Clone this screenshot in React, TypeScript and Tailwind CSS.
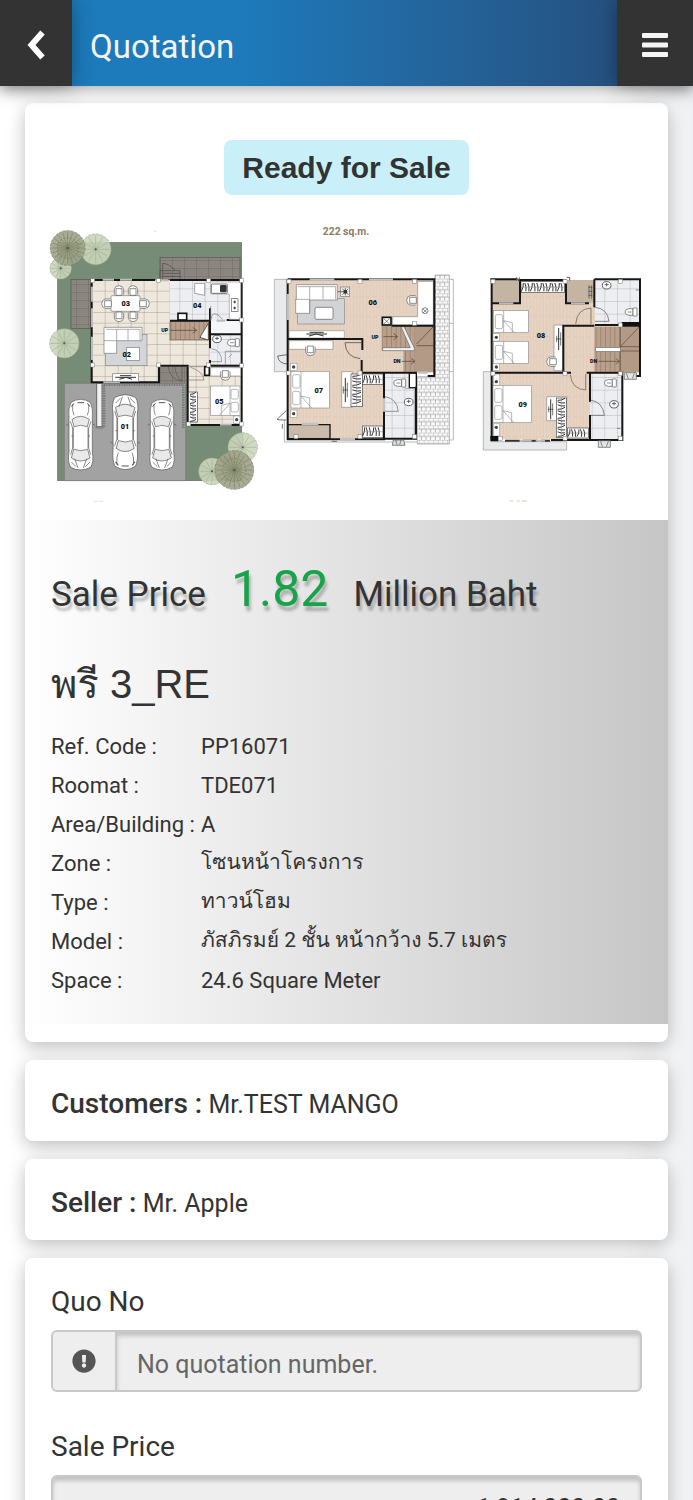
import React from "react";
import { FaExclamationCircle } from "react-icons/fa";

const DETAILS = [
  { label: "Ref. Code :", value: "PP16071" },
  { label: "Roomat :", value: "TDE071" },
  { label: "Area/Building :", value: "A" },
  { label: "Zone :", value: "โซนหน้าโครงการ", thai: true },
  { label: "Type :", value: "ทาวน์โฮม", thai: true },
  { label: "Model :", value: "ภัสภิรมย์ 2 ชั้น หน้ากว้าง 5.7 เมตร", thai: true },
  { label: "Space :", value: "24.6 Square Meter" },
];

const CARD = "rounded-lg bg-white shadow-[0_5px_18px_rgba(0,0,0,0.26)]";

type Point = { x: number; y: number };

function Tree({ x, y, r, dark }: Point & { r: number; dark?: boolean }) {
  const spokes = Array.from({ length: dark ? 20 : 12 }, (_, i) => (i * Math.PI * 2) / (dark ? 20 : 12));
  const line = dark ? "#74775a" : "#9aaa8d";
  return (
    <g>
      <circle cx={x} cy={y} r={r} fill={dark ? "#a0a388" : "#cbd6bd"} fillOpacity={0.9} stroke={line} strokeWidth={2} strokeDasharray="9 3" />
      {spokes.map((a) => (
        <line key={a} x1={x} y1={y} x2={x + Math.cos(a) * r * 0.92} y2={y + Math.sin(a) * r * 0.92} stroke={line} strokeWidth={1.6} />
      ))}
      {dark && <circle cx={x} cy={y} r={r * 0.6} fill="none" stroke={line} strokeWidth={2} strokeDasharray="6 5" />}
      <circle cx={x} cy={y} r={3} fill="#4d5640" />
    </g>
  );
}

function Car({ x, y, flip }: Point & { flip?: boolean }) {
  return (
    <g transform={flip ? `translate(${x} ${y + 216}) scale(1 -1)` : `translate(${x} ${y})`} stroke="#555" strokeWidth={2} fill="#fff">
      <path d="M10 12Q40-8 70 12Q78 30 75 60V160Q80 190 70 206Q40 222 10 206Q0 190 5 160V60Q2 30 10 12Z" />
      <path d="M14 62Q40 44 66 62L60 84Q40 76 20 84Z" fill="#e9e9e9" />
      <path d="M19 152Q40 160 61 152L68 178Q40 196 12 178Z" fill="#e9e9e9" />
      <path d="M18 86V150M62 86V150M9 68L16 88V148L10 168M71 68L64 88V148L70 168M12 112H18M62 112H68M16 16Q14 38 20 50M64 16Q66 38 60 50" fill="none" />
      <path d="M12 190L26 204M68 190L54 204M22 180L32 208M58 180L48 208M4 76L-3 80M76 76L83 80" fill="none" />
      <path d="M30 12H50M12 24L20 14M68 24L60 14" fill="none" strokeWidth={3} />
    </g>
  );
}

function Mark({ x, y, children, size = 22 }: Point & { children: string; size?: number }) {
  return (
    <text x={x} y={y} fontSize={size} fontWeight={900} textAnchor="middle" fill="#111" fontFamily="Roboto, sans-serif">
      {children}
    </text>
  );
}

function Bed({ x, y, w, h, twin, right }: Point & { w: number; h: number; twin?: boolean; right?: boolean }) {
  const half = h / 2;
  return (
    <g transform={right ? `translate(${x + w} ${y}) scale(-1 1)` : `translate(${x} ${y})`} fill="#fff" stroke="#888" strokeWidth={1.8}>
      <rect width={w} height={h} />
      {twin ? (
        <>
          <rect x={5} y={10} width={22} height={half - 15} rx={5} />
          <rect x={5} y={half + 5} width={22} height={half - 15} rx={5} />
        </>
      ) : (
        <rect x={5} y={12} width={22} height={h - 24} rx={5} />
      )}
      <path d={`M30 ${h - 36}L62 ${h}M30 ${h - 36}L56 ${h - 30}V${h}M30 0V${h}`} fill="none" />
    </g>
  );
}

function Closet({ x, y, w, h }: Point & { w: number; h: number }) {
  const vertical = h > w;
  const count = Math.floor((vertical ? h : w) / 9);
  return (
    <g>
      <rect x={x} y={y} width={w} height={h} fill="#fff" stroke="#444" strokeWidth={2} />
      {Array.from({ length: count }, (_, i) => {
        const at = 4 + i * 9;
        const tilt = i % 3 === 0 ? 6 : -3;
        return vertical ? (
          <path key={i} d={`M${x + 4} ${y + at + tilt / 2}L${x + w / 2} ${y + at + 2}L${x + w - 4} ${y + at - tilt / 2}`} stroke="#333" strokeWidth={3} fill="none" />
        ) : (
          <path key={i} d={`M${x + at + tilt / 2} ${y + 4}L${x + at + 2} ${y + h / 2}L${x + at - tilt / 2} ${y + h - 4}`} stroke="#333" strokeWidth={3} fill="none" />
        );
      })}
      <path d={vertical ? `M${x + w / 2} ${y}V${y + h}` : `M${x} ${y + h / 2}H${x + w}`} stroke="#777" strokeWidth={1.5} />
    </g>
  );
}

function Tv({ x, y, h }: Point & { h: number }) {
  return (
    <g stroke="#333" fill="none">
      <path d={`M${x} ${y}V${y + h}`} strokeWidth={3} />
      <path d={`M${x + 6} ${y + h * 0.2}V${y + h * 0.8}M${x - 6} ${y + h * 0.35}V${y + h * 0.65}M${x - 8} ${y + h / 2}H${x + 8}`} strokeWidth={2} />
    </g>
  );
}

function Toilet({ x, y }: Point) {
  return (
    <g transform={`translate(${x} ${y})`} fill="#fff" stroke="#555" strokeWidth={2}>
      <path d="M24 -10H12Q0 -9 0 0Q0 9 12 10H24Z" />
      <rect x={24} y={-12} width={12} height={24} rx={2} />
      <path d="M8 0H20" />
    </g>
  );
}

function Basin({ x, y }: Point) {
  return (
    <g fill="#fff" stroke="#444" strokeWidth={2.5}>
      <ellipse cx={x} cy={y} rx={13} ry={11} />
      <path d={`M${x - 6} ${y - 2}H${x + 6}M${x} ${y - 7}V${y + 3}`} />
    </g>
  );
}

function Lamp({ x, y }: Point) {
  return (
    <g>
      <rect x={x} y={y} width={20} height={22} fill="#fff" stroke="#888" strokeWidth={1.5} />
      <circle cx={x + 10} cy={y + 11} r={5} fill="#444" />
    </g>
  );
}

function Chair({ x, y, turn = 0 }: Point & { turn?: number }) {
  return (
    <path d="M-14 12V-4Q-12 -15 0 -15Q12 -15 14 -4V12M-9 14V-6H9V14Z" transform={`translate(${x} ${y}) rotate(${turn})`} fill="#fff" stroke="#555" strokeWidth={2} />
  );
}

function Posts({ at }: { at: number[][] }) {
  return (
    <>
      {at.map(([x, y]) => (
        <rect key={`${x}-${y}`} x={x - 6} y={y - 6} width={12} height={12} fill="#fff" stroke="#777" strokeWidth={1.5} />
      ))}
    </>
  );
}

function GroundFloor() {
  return (
    <g transform="translate(45 15)">
      <rect x={53} y={68} width={552} height={714} fill="#768c76" stroke="#5c6b5c" strokeWidth={2} />
      <path d="M73 490H437V782H73Z" fill="#a3a2a2" stroke="#777" strokeWidth={2} />
      <rect x={360} y={112} width={240} height={66} fill="url(#deck)" stroke="#5b5450" strokeWidth={2} />
      <path d="M360 178V152H420V178M368 160H420M368 169H420M368 178V130Q385 130 405 150" fill="none" stroke="#4c4643" strokeWidth={2} />
      <rect x={93} y={178} width={60} height={147} fill="url(#deck)" stroke="#5b5450" strokeWidth={2} />

      <path d="M155 180H605V615H443V440H357V487H155Z" fill="url(#tile)" />
      <path d="M390 180H605V300H390Z" fill="url(#coolTile)" />
      <path d="M510 300H605V437H510Z" fill="url(#coolTile)" />
      <rect x={512} y={303} width={90} height={38} fill="#f6f7f9" />
      <rect x={360} y={440} width={82} height={50} fill="url(#deck)" />
      <path d="M385 440Q388 478 426 484M404 440Q408 470 426 484V440" fill="none" stroke="#555" strokeWidth={2} />
      <path d="M170 490H186V620H170Z" fill="#efefef" stroke="#666" strokeWidth={3} />
      <path d="M192 494H430V625M192 494V622H166" fill="none" stroke="#777" strokeWidth={8} strokeDasharray="3 2" />

      <rect x={390} y={305} width={115} height={55} fill="url(#stairs)" stroke="#6b5445" strokeWidth={2} />
      <path d="M390 331H468M458 322L470 331L458 340" fill="none" stroke="#4f3c30" strokeWidth={2} />
      <path d="M480 352L505 310V360Z" fill="#fff" stroke="#222" strokeWidth={2} />

      <path d="M155 180V487H357V437M150 180H345M390 180H605M605 180V615H443V437H357M390 302H510M510 265V385M510 343H605M560 300H605M510 437H605M510 420V440M550 437H605" fill="none" stroke="#161616" strokeWidth={6} />
      <path d="M188 179H222M240 179H276M156 200V245M156 265V322M156 350V420M190 487H240M540 614H575M530 302H556M358 181H384" stroke="#bcbcbc" strokeWidth={6} />
      <path d="M512 302Q516 262 548 298M512 302V258M512 425H545Q545 390 514 386M445 480H492Q490 455 452 442M443 440H490" fill="none" stroke="#777" strokeWidth={2} />

      <rect x={213} y={227} width={87} height={47} rx={3} fill="#fff" stroke="#777" strokeWidth={2} />
      <Chair x={237} y={212} />
      <Chair x={279} y={212} />
      <Chair x={237} y={290} turn={180} />
      <Chair x={279} y={290} turn={180} />
      <Chair x={200} y={251} turn={270} />
      <Chair x={313} y={251} turn={90} />

      <rect x={197} y={343} width={124} height={94} fill="#d4d5d8" stroke="#888" strokeWidth={2} />
      <path d="M192 322H306V362H230V400H192Z" fill="#fff" stroke="#777" strokeWidth={2} />
      <path d="M198 328H300V362M230 328V362M264 328V362M192 362H230" fill="none" stroke="#888" strokeWidth={2} />
      <rect x={260} y={382} width={38} height={40} fill="#fff" stroke="#777" strokeWidth={2} />
      <rect x={218} y={461} width={78} height={24} fill="#fff" stroke="#777" strokeWidth={2} />
      <path d="M226 472H288M240 467H274M238 478L258 472L276 478" fill="none" stroke="#333" strokeWidth={3} />

      <path d="M464 190H494V226L464 220Z" fill="#fff" stroke="#777" strokeWidth={2} />
      <path d="M512 186H602V298H568V222H512Z" fill="#fff" stroke="#999" strokeWidth={2} />
      <rect x={514} y={192} width={48} height={28} rx={3} fill="#fff" stroke="#333" strokeWidth={2} />
      <rect x={540} y={195} width={20} height={22} rx={4} fill="#333" />
      <rect x={574} y={236} width={20} height={38} fill="#fff" stroke="#555" strokeWidth={2} />
      <path d="M580 246H588M584 242V250M580 264H588M584 260V268" stroke="#333" strokeWidth={3} />
      <rect x={414} y={280} width={26} height={20} fill="#fff" stroke="#111" strokeWidth={5} />
      <rect x={494} y={440} width={14} height={26} fill="#fff" stroke="#111" strokeWidth={5} />
      <Basin x={531} y={357} />
      <Toilet x={562} y={368} />
      <path d="M556 394V434M556 394H602M566 412L576 402" fill="none" stroke="#777" strokeWidth={2} />

      <path d="M512 443H602V468H512Z" fill="#fff" stroke="#888" strokeWidth={2} />
      <Chair x={556} y={466} turn={180} />
      <Bed x={512} y={498} w={88} h={88} twin right />
      <Lamp x={580} y={588} />
      <Closet x={446} y={516} w={26} h={90} />
      <Posts at={[[158, 182], [355, 182], [506, 182], [605, 182], [158, 435], [355, 435], [605, 300], [605, 437], [506, 435], [605, 612], [446, 612]]} />

      <Car x={82} y={536} />
      <g transform="translate(214 522) scale(1.04 1.06)">
        <Car x={0} y={0} flip />
      </g>
      <Car x={326} y={536} />

      <Tree x={62} y={145} r={32} />
      <Tree x={167} y={88} r={46} />
      <Tree x={83} y={84} r={52} dark />
      <Tree x={73} y={370} r={44} />
      <Tree x={608} y={682} r={44} />
      <Tree x={516} y={754} r={40} />
      <Tree x={583} y={750} r={58} dark />

      <Mark x={257} y={259}>03</Mark>
      <Mark x={260} y={411}>02</Mark>
      <Mark x={472} y={263}>04</Mark>
      <Mark x={538} y={551}>05</Mark>
      <Mark x={255} y={627}>01</Mark>
      <Mark x={374} y={337} size={16}>UP</Mark>
      <path d="M342 34H350M160 844H172M176 844H190" stroke="#d5d5d5" strokeWidth={2} />
    </g>
  );
}

function SecondFloor() {
  return (
    <g transform="translate(720 15)">
      <text x={243} y={46} fontSize={31} fontWeight={700} textAnchor="middle" fill="#8b8063" fontFamily="Roboto, sans-serif">
        222 sq.m.
      </text>
      <path d="M28 178H68V455H28Z" fill="#e9eaec" stroke="#999" strokeWidth={2} />
      <path d="M58 600V666H553M553 178H565V660H553M553 310H565M553 455H565" fill="none" stroke="#aaa" strokeWidth={2.5} />
      <path d="M510 165H553V672H457V470H510Z" fill="url(#brick)" stroke="#999" strokeWidth={2} />
      <path d="M68 180H508V458H357V658H68Z" fill="url(#wood)" />
      <path d="M360 458H455V655H360Z" fill="url(#coolTile)" />

      <rect x={98} y={236} width={140} height={76} fill="#d2d3d6" stroke="#888" strokeWidth={2} />
      <path d="M94 194H217V240H134V280H92V238H94Z" fill="#fff" stroke="#777" strokeWidth={2} />
      <path d="M98 200H212V238M134 200V280M174 200V238M92 238H134" fill="none" stroke="#888" strokeWidth={2} />
      <rect x={150} y={262} width={54} height={36} rx={5} fill="#fff" stroke="#555" strokeWidth={2} />
      <rect x={227} y={201} width={27} height={28} fill="#eee" stroke="#777" strokeWidth={2} />
      <path d="M218 215H240M241 204V226M232 206L250 224M250 206L232 224" stroke="#333" strokeWidth={2} />
      <circle cx={241} cy={215} r={6} fill="#333" />
      <path d="M72 332H238V354H72Z" fill="#fff" stroke="#999" strokeWidth={2} />
      <path d="M124 342H186M134 337H176M132 348L154 342L176 348" fill="none" stroke="#333" strokeWidth={3} />
      <path d="M458 184H505V315H383V290H458Z" fill="#fff" stroke="#888" strokeWidth={2} />
      <Chair x={440} y={241} turn={270} />
      <circle cx={480} cy={272} r={9} fill="#fff" stroke="#555" strokeWidth={2} />
      <path d="M473 266L486 278M487 267L474 279" stroke="#555" strokeWidth={2} />

      <path d="M350 318H505V455H415V392H350Z" fill="url(#stairs)" />
      <path d="M448 318H505V455H448Z" fill="#b39a86" />
      <path d="M505 320L455 372M455 377H505M355 350H396M386 341L398 350L386 359M410 424H448M438 415L450 424L438 433" fill="none" stroke="#4f3c30" strokeWidth={2} />
      <path d="M408 320H417L448 384V392H353V383H436Z" fill="#f2f2f2" stroke="#666" strokeWidth={2} />

      <path d="M72 362H204V388H72Z" fill="#fff" stroke="#888" strokeWidth={2} />
      <Chair x={136} y={392} turn={180} />
      <Lamp x={76} y={430} />
      <Lamp x={76} y={570} />
      <Bed x={78} y={454} w={115} h={110} twin />
      <path d="M230 455H262V562H230Z" fill="#fff" stroke="#888" strokeWidth={2} />
      <Tv x={241} y={474} h={72} />
      <Closet x={258} y={462} w={34} h={98} />
      <Closet x={292} y={462} w={62} h={32} />
      <Closet x={292} y={618} w={62} h={34} />
      <path d="M68 614H195V656H68Z" fill="#c9bba8" stroke="#161616" strokeWidth={4} />
      <rect x={433} y={459} width={21} height={44} fill="#fff" stroke="#111" strokeWidth={4} />
      <path d="M420 505H448V652" fill="none" stroke="#888" strokeWidth={2} />
      <Toilet x={386} y={489} />
      <Basin x={431} y={546} />
      <path d="M360 530Q396 536 400 574H360" fill="none" stroke="#666" strokeWidth={2} />

      <path d="M68 178V658H357V458H292M68 178H508V468H488M508 317H380M68 357H292V390M290 420V458M357 458H455M453 500V656H357" fill="none" stroke="#161616" strokeWidth={6} />
      <rect x={352} y={292} width={26} height={23} fill="#fff" stroke="#111" strokeWidth={5} />
      <path d="M356 296L374 312M374 296L356 312" stroke="#555" strokeWidth={2} />
      <path d="M134 179H208M312 179H384M69 222V300M110 612H160M225 657H270M460 458H488M357 535V575" stroke="#c2c2c2" strokeWidth={7} />
      <path d="M288 368H240Q242 412 286 416M66 432Q40 430 38 408L66 404M64 600Q40 600 36 598L64 572M52 612V626M200 664H216" fill="none" stroke="#555" strokeWidth={2.5} />
      <path d="M385 660H416L420 676H382ZM392 660L396 674M408 660L404 674" fill="#ddd" stroke="#555" strokeWidth={2} />
      <Posts at={[[72, 184], [285, 184], [449, 184], [70, 459], [285, 459], [449, 310], [93, 650], [285, 650], [449, 650]]} />

      <Mark x={323} y={256}>06</Mark>
      <Mark x={161} y={520}>07</Mark>
      <Mark x={330} y={356} size={16}>UP</Mark>
      <Mark x={396} y={430} size={16}>DN</Mark>
    </g>
  );
}

function ThirdFloor() {
  return (
    <g transform="translate(1320 15)">
      <path d="M55 455H80V665H305V690H55Z" fill="#e9eaec" stroke="#999" strokeWidth={2} />
      <path d="M80 180H525V458H470V658H80Z" fill="url(#wood)" />
      <path d="M390 180H525V312H390Z" fill="url(#coolTile)" />
      <path d="M375 460H468V658H375Z" fill="url(#coolTile)" />
      <path d="M80 180H165V248H80ZM303 180H388V248H303Z" fill="#c3b5a2" />
      <path d="M388 320H525V455H388Z" fill="url(#stairs)" />
      <path d="M466 320H523V455H466Z" fill="#b39a86" />
      <path d="M523 320L466 380M466 380H523M466 393H523M400 424H462M452 415L464 424L452 433M466 320V455" fill="none" stroke="#59463a" strokeWidth={2} />
      <rect x={392} y={383} width={74} height={11} fill="#fff" stroke="#777" strokeWidth={2} />

      <Closet x={168} y={185} w={130} h={33} />
      <path d="M372 196V236M380 196V236M370 202H382M370 214H382M370 226H382" stroke="#444" strokeWidth={2} />
      <Bed x={86} y={272} w={104} h={66} />
      <Bed x={86} y={364} w={104} h={66} />
      <Lamp x={84} y={341} />
      <Lamp x={84} y={430} />
      <path d="M267 315H294V452H267Z" fill="#fff" stroke="#888" strokeWidth={2} />
      <Tv x={281} y={324} h={66} />
      <Chair x={260} y={425} turn={270} />

      <path d="M86 462H104V496H86ZM86 610H104V648H86Z" fill="#fff" stroke="#999" strokeWidth={2} />
      <circle cx={94} cy={485} r={5} fill="#444" />
      <circle cx={94} cy={622} r={5} fill="#444" />
      <Bed x={84} y={496} w={115} h={112} twin />
      <path d="M245 530H305V602H245Z" fill="#fff" stroke="#888" strokeWidth={2} />
      <Tv x={257} y={538} h={60} />
      <Closet x={274} y={534} w={30} h={118} />
      <Closet x={308} y={624} w={62} h={30} />

      <Basin x={425} y={196} />
      <Toilet x={480} y={276} />
      <Toilet x={418} y={489} />
      <Basin x={447} y={553} />
      <path d="M390 262Q428 266 432 304H390M376 540Q414 546 418 586H376M332 312Q336 266 378 264V312M316 464Q320 508 362 510V462M512 210H524M456 625H466" fill="none" stroke="#555" strokeWidth={2} />

      <path d="M80 180V458M76 178H158M80 250H165V180M160 180H305M303 180V250H372M388 178H525V468H510M388 178V262M390 315H525M295 455V317H388M80 458H318M365 458H472V660H450M375 458V545M375 585V658M472 660H258M80 458V656" fill="none" stroke="#161616" strokeWidth={6} />
      <path d="M470 306H525V320H470ZM76 648H100V664H76Z" fill="#111" />
      <path d="M120 662H255" stroke="#333" strokeWidth={6} strokeDasharray="44 10" />
      <path d="M165 662H200M212 662H240M102 250H145M318 250H360" stroke="#bbb" strokeWidth={6} />
      <path d="M154 172V182M163 172V182M305 172H314V182" fill="none" stroke="#555" strokeWidth={3} />
      <path d="M478 458H514V478H478ZM484 460L490 476M508 460L502 476M400 662H436V682H400ZM407 664L412 680M430 664L424 680" fill="#e4e4e4" stroke="#555" strokeWidth={2} />
      <Posts at={[[84, 184], [300, 184], [466, 184], [84, 461], [300, 461], [466, 461], [466, 315], [106, 655], [300, 655], [466, 655]]} />

      <Mark x={228} y={355}>08</Mark>
      <Mark x={173} y={561}>09</Mark>
      <Mark x={386} y={430} size={16}>DN</Mark>
      <path d="M134 843H144M156 843H164M170 843H186" stroke="#bbb49d" strokeWidth={2} />
    </g>
  );
}

function FloorPlan() {
  return (
    <svg viewBox="0 0 1929 915" className="block w-full" role="img" aria-label="Floor plan">
      <defs>
        <pattern id="tile" x={155} y={180} width={39} height={32} patternUnits="userSpaceOnUse">
          <rect width={39} height={32} fill="#eee8dc" />
          <path d="M39 0H0V32" fill="none" stroke="#a89f90" strokeWidth={3} />
        </pattern>
        <pattern id="coolTile" x={0} y={15} width={38} height={38} patternUnits="userSpaceOnUse">
          <rect width={38} height={38} fill="#eceef1" />
          <path d="M38 0H0V38" fill="none" stroke="#aaadb3" strokeWidth={2.5} />
        </pattern>
        <pattern id="wood" width={20} height={60} patternUnits="userSpaceOnUse">
          <rect width={20} height={60} fill="#e6d3c1" />
          <path d="M5 0V60M15 0V60M0 20H5M5 50H15" stroke="#dac4b0" strokeWidth={1.5} />
        </pattern>
        <pattern id="stairs" width={14} height={60} patternUnits="userSpaceOnUse">
          <rect width={14} height={60} fill="#b9a08c" />
          <path d="M1 0V60" stroke="#85705f" strokeWidth={2} />
        </pattern>
        <pattern id="deck" width={36} height={24} patternUnits="userSpaceOnUse">
          <rect width={36} height={24} fill="#8d8782" />
          <path d="M0 6H36M0 12H36M0 18H36" stroke="#7f7974" strokeWidth={1} />
          <path d="M36 0H0V24" fill="none" stroke="#625c57" strokeWidth={2} />
        </pattern>
        <pattern id="brick" width={14} height={22} patternUnits="userSpaceOnUse">
          <rect width={14} height={22} fill="#fafafa" />
          <path d="M0 0H14M0 11H14M0 0V11M7 11V22" stroke="#8c8c8c" strokeWidth={1.8} />
        </pattern>
      </defs>
      <GroundFloor />
      <SecondFloor />
      <ThirdFloor />
    </svg>
  );
}

export default function App() {
  return (
    <div className="h-screen overflow-hidden bg-linear-to-r from-white from-90% to-[#eff0f3] font-['Roboto','Loma',sans-serif] text-[#333]">
      <header className="relative flex h-[86px] bg-linear-to-r from-[#1d7abb] from-35% to-[#25507f] to-90% shadow-[0_3px_14px_rgba(0,0,0,0.35)]">
        <button aria-label="Back" className="flex w-[72px] items-center justify-center bg-[#333] pt-1 shadow-[0_0_20px_rgba(0,0,0,0.35)]">
          <svg viewBox="0 0 18 30" className="h-[30px] w-[18px]" fill="none" stroke="#fff" strokeWidth={6}>
            <path d="M15.5 2.5L4.5 15L15.5 27.5" />
          </svg>
        </button>
        <h1 className="flex flex-1 items-center px-[18px] pt-2 text-[33px] text-[#f4f4f4]">Quotation</h1>
        <button aria-label="Menu" className="flex w-[76px] items-center justify-center bg-[#333] pt-1 shadow-[0_0_20px_rgba(0,0,0,0.35)]">
          <svg viewBox="0 0 26 24" className="h-6 w-[26px]" fill="#f4f4f4">
            <rect width={26} height={5} rx={1} />
            <rect y={9.5} width={26} height={5} rx={1} />
            <rect y={19} width={26} height={5} rx={1} />
          </svg>
        </button>
      </header>

      <main className="flex flex-col gap-[18px] px-[25px] pt-[17px]">
        <section className={`${CARD} pb-[18px]`}>
          <div className="flex justify-center pt-[37px] pb-5">
            <span className="rounded-lg bg-[#c9f0f8] px-[18px] font-['Liberation_Sans',sans-serif] text-[30px] leading-[55px] font-bold">
              Ready for Sale
            </span>
          </div>
          <FloorPlan />
          <div className="bg-linear-to-r from-white to-[#c6c6c6] px-[26px] pt-[37px] pb-6">
            <p className="flex items-baseline gap-[25px] text-[35px] leading-[64px] text-shadow-[2px_5px_3px_rgba(0,0,0,0.25)]">
              Sale Price
              <span className="text-[50px] leading-[64px] text-[#17a348]">1.82</span>
              Million Baht
            </p>
            <h2 className="mt-[27px] font-['Liberation_Sans','Loma',sans-serif] text-[40px] leading-[60px]">พรี 3_RE</h2>
            <dl className="mt-[13px] grid grid-cols-[150px_1fr] text-[22px] leading-[39px] whitespace-nowrap">
              {DETAILS.map((d) => (
                <React.Fragment key={d.label}>
                  <dt>{d.label}</dt>
                  <dd className={d.thai ? "text-[21px] leading-9" : ""}>{d.value}</dd>
                </React.Fragment>
              ))}
            </dl>
          </div>
        </section>

        <section className={`${CARD} px-[26px] pt-6 pb-4 text-[25px] leading-10`}>
          <span className="text-[28px] font-medium">Customers :</span> Mr.TEST MANGO
        </section>

        <section className={`${CARD} px-[26px] pt-6 pb-4 text-[25px] leading-10`}>
          <span className="text-[28px] font-medium">Seller :</span> Mr. Apple
        </section>

        <section className={`${CARD} px-[26px] pt-6 pb-6`}>
          <label htmlFor="quo-no" className="block text-[28px] leading-10">
            Quo No
          </label>
          <div className="mt-2 flex h-[62px] overflow-hidden rounded-md border-2 border-[#c8c8c8] bg-[#eee]">
            <span className="flex w-[64px] items-center justify-center border-r-2 border-[#c8c8c8] text-[#555]">
              <FaExclamationCircle className="size-6" />
            </span>
            <input
              id="quo-no"
              readOnly
              placeholder="No quotation number."
              className="min-w-0 flex-1 px-5 pt-2 text-[25px] placeholder-[#666] shadow-[inset_0_4px_4px_rgba(0,0,0,0.18)] outline-none"
            />
          </div>
          <label htmlFor="sale-price" className="mt-[35px] block text-[28px] leading-10">
            Sale Price
          </label>
          <input
            id="sale-price"
            readOnly
            defaultValue="1,814,000.00"
            className="mt-2 block h-[62px] w-full rounded-md border-2 border-[#c8c8c8] bg-[#eee] px-5 pt-1 text-right text-[25px] shadow-[inset_0_4px_4px_rgba(0,0,0,0.18)] outline-none"
          />
        </section>
      </main>
    </div>
  );
}
